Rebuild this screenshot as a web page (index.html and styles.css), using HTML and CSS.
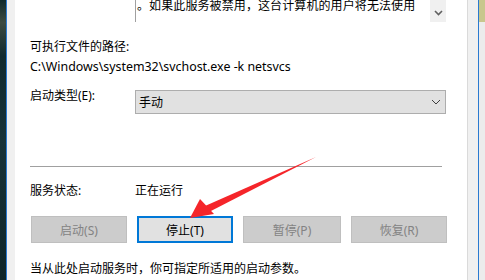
FILE: index.html
```html
<!DOCTYPE html>
<html lang="zh-CN">
<head>
<meta charset="UTF-8">
<title>服务属性</title>
<link rel="stylesheet" href="styles.css">
</head>
<body>
<div class="screen">
  <div class="desktop"></div>
  <div class="window">
    <div class="frame-left"></div>
    <div class="content">
      <div class="desc-row">
        <div class="desc-box">
          <div class="desc-text">。如果此服务被禁用，这台计算机的用户将无法使用</div>
          <div class="scrollbar">
            <svg width="9" height="6" viewBox="0 0 9 6"><path d="M1 1 L4.5 4.5 L8 1" fill="none" stroke="#606060" stroke-width="1.6"/></svg>
          </div>
        </div>
      </div>

      <div class="label path-label">可执行文件的路径:</div>
      <div class="label path">C:\Windows\system32\svchost.exe -k netsvcs</div>

      <div class="field-row">
        <div class="field-label">启动类型(E):</div>
        <div class="combo">
          <span>手动</span>
          <svg width="10" height="6" viewBox="0 0 10 6"><path d="M1 1 L5 5 L9 1" fill="none" stroke="#404040" stroke-width="1"/></svg>
        </div>
      </div>

      <hr class="sep">

      <div class="field-row status-row">
        <div class="field-label">服务状态:</div>
        <div>正在运行</div>
      </div>

      <div class="buttons">
        <button class="btn disabled">启动(S)</button>
        <button class="btn active">停止(T)</button>
        <button class="btn disabled wide">暂停(P)</button>
        <button class="btn disabled">恢复(R)</button>
      </div>

      <div class="label hint">当从此处启动服务时，你可指定所适用的启动参数。</div>
    </div>
    <div class="frame-right"></div>
  </div>
  <div class="next-window">
    <div class="nw-top"></div>
    <div class="nw-body"></div>
  </div>

  <svg class="arrow" width="485" height="280" viewBox="0 0 485 280">
    <polygon points="316,157 205,206 209,212" fill="#f5252a"/>
    <polygon points="190,218 200,199 214,214" fill="#f5252a"/>
  </svg>
</div>
</body>
</html>
```

FILE: styles.css
```css
body {
  margin: 0;
  font-family: "Noto Sans", "Noto Sans CJK SC", sans-serif;
  font-size: 12px;
  color: #000;
}
.screen {
  position: relative;
  display: flex;
  width: 485px;
  height: 280px;
  overflow: hidden;
}
.desktop {
  width: 6px;
  background: linear-gradient(180deg, #0f2a2c 0%, #3c4a40 8%, #112a2e 20%, #183238 50%, #0e2528 100%);
}
.window {
  display: flex;
  border-left: 1px solid #2a7ad0;
  border-right: 1px solid #2a7ad0;
  background: #f0f0f0;
}
.frame-left {
  width: 8px;
}
.frame-right {
  width: 10px;
  border-left: 1px solid #dadada;
}
.content {
  width: 437px;
  padding-left: 15px;
  background: #fff;
}
.desc-row {
  height: 22px;
  padding-left: 105px;
}
.desc-box {
  display: flex;
  justify-content: space-between;
  height: 22px;
  width: 310px;
  border-left: 1px solid #a0a0a0;
}
.desc-text {
  margin-top: -4px;
  padding-left: 1px;
  letter-spacing: 0.1px;
}
.scrollbar {
  display: flex;
  align-items: center;
  justify-content: center;
  width: 16px;
  padding-top: 4px;
  box-sizing: border-box;
  background: #f0f0f0;
}
.label {
  line-height: 16px;
}
.path-label {
  margin-top: 17px;
}
.path {
  margin-top: 4px;
  font-family: "Noto Sans", sans-serif;
  font-size: 12.4px;
}
.field-row {
  display: flex;
  align-items: center;
}
.field-label {
  width: 105px;
}
.combo {
  display: flex;
  align-items: center;
  justify-content: space-between;
  width: 302px;
  height: 22px;
  padding: 0 4px 0 3px;
  margin-top: 15px;
  border: 1px solid #adadad;
  background: #e1e1e1;
}
.sep {
  margin: 52px 25px 0 0;
  border: 0;
  border-top: 1px solid #a0a0a0;
}
.status-row {
  margin-top: 16px;
  line-height: 16px;
}
.buttons {
  display: flex;
  gap: 10px;
  margin-top: 17px;
  padding-left: 1px;
}
.btn {
  width: 96px;
  height: 27px;
  padding: 0;
  font-family: "Noto Sans", "Noto Sans CJK SC", sans-serif;
  font-size: 12px;
  border: 1px solid #bfbfbf;
  background: #cccccc;
  color: #838383;
}
.btn.wide {
  width: 98px;
}
.btn.active {
  border: 2px solid #0078d7;
  background: #e1e1e1;
  color: #000;
}
.hint {
  margin-top: 18px;
}
.next-window {
  flex: 1;
  display: flex;
  flex-direction: column;
}
.nw-top {
  height: 22px;
  background: #c8c78d;
}
.nw-body {
  flex: 1;
  background: #ececec;
}
.arrow {
  position: absolute;
  left: 0;
  top: 0;
  pointer-events: none;
}
```
